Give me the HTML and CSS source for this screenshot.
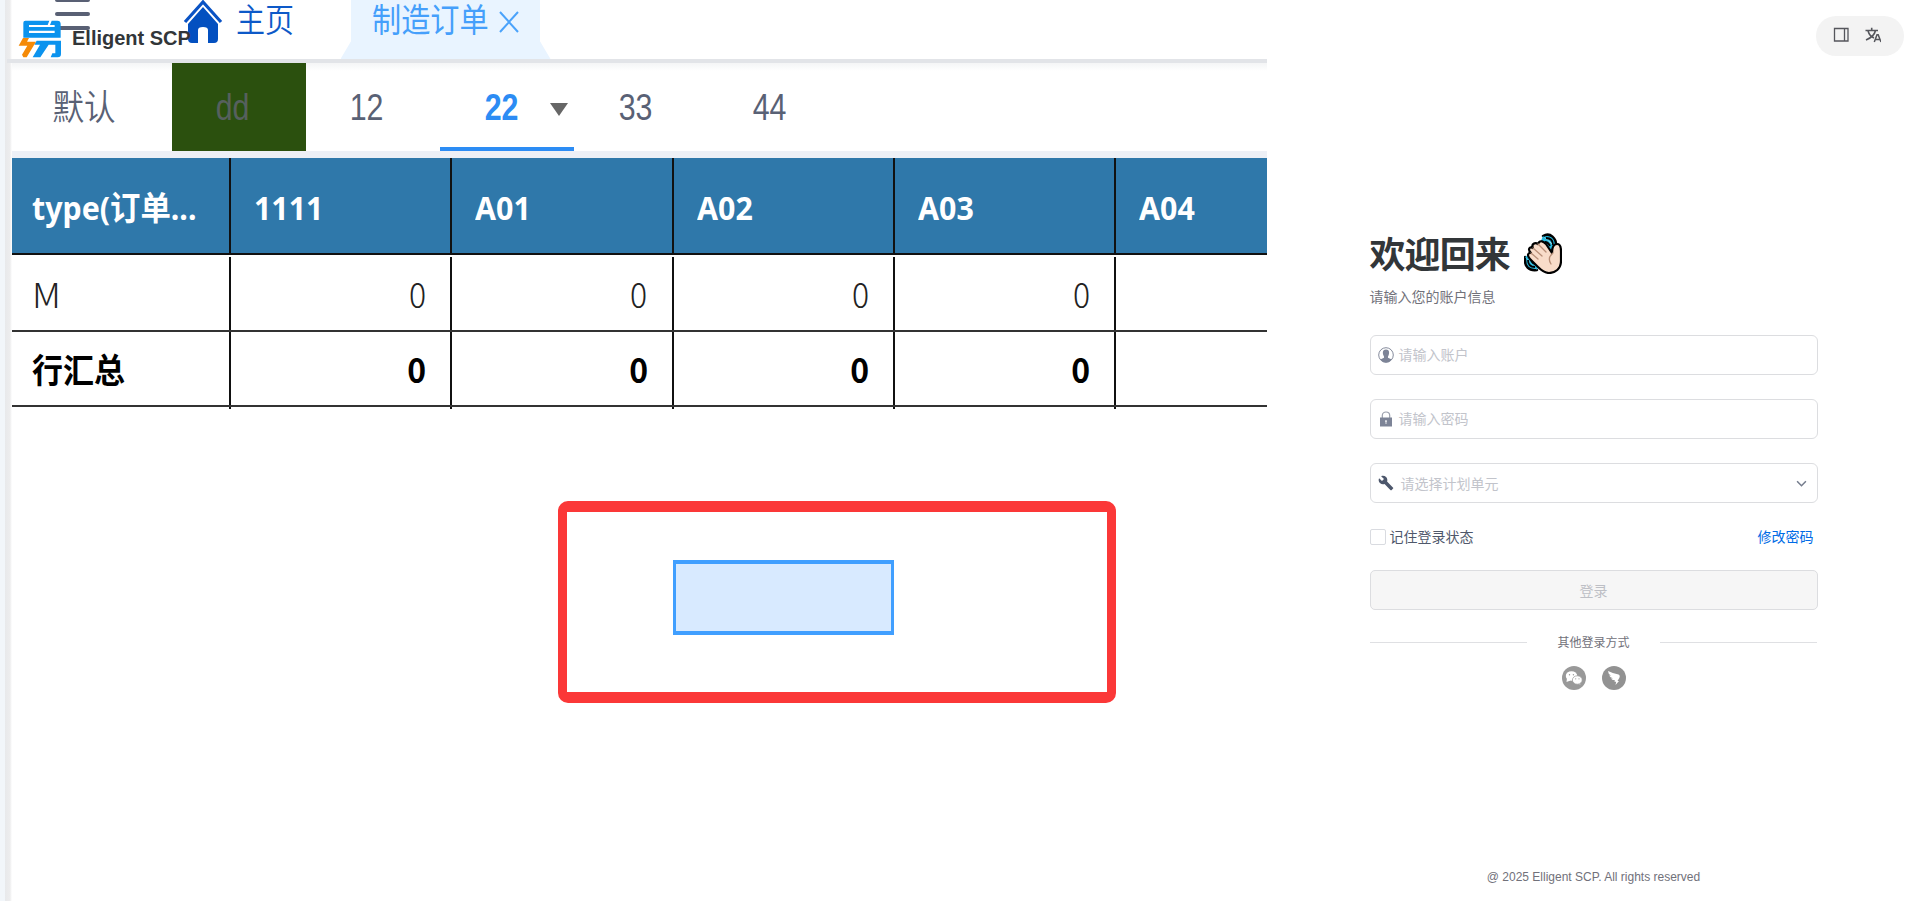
FILE: index.html
```html
<!DOCTYPE html>
<html lang="zh-CN">
<head>
<meta charset="utf-8">
<title>Elligent SCP</title>
<link rel="stylesheet" href="styles.css">
</head>
<body>
<main class="page">
  <section class="preview">
    <div class="brand">
      <svg class="brand-logo" viewBox="52 60 132 114">
        <path fill="#0b93ee" fill-rule="evenodd" d="M74 62H146L141 75H85V81H162V92H85V99H162V75H148L153 62H170Q180 62 180 72V113H68V68Q68 62 74 62Z"/>
        <path fill="#0b93ee" d="M108 122H181V162Q181 172 171 172H150L155 160H164V134H144L119 172H96L118 134H101Z"/>
        <path fill="#f58a07" d="M67 114H85L79 125H106L78 172H68L64 164L80 137H54Z"/>
      </svg>
      <span>Elligent SCP</span>
    </div>
    <header class="shot-bar">
      <div class="burger"><i></i><i></i><i></i></div>
      <svg class="home" viewBox="0 0 40 46"><path d="M2 23 20 3 38 23" fill="none" stroke="#0a53c4" stroke-width="3.2"/><path d="M20 8 35 25V40Q35 44 31 44H25V31Q25 28 20 28T15 31V44H9Q5 44 5 40V25Z" fill="#0350c0"/></svg>
      <span class="home-label"><b class="sq">主页</b></span>
      <div class="open-tab"><b class="sq">制造订单</b>
        <svg class="close" viewBox="0 0 20 22"><path d="M1 1 19 21M19 1 1 21" stroke="#4ba3fb" stroke-width="2"/></svg>
      </div>
    </header>
    <nav class="views">
      <div class="view first"><b class="sq">默认</b></div>
      <div class="view green"><b class="sq num">dd</b></div>
      <div class="view"><b class="sq num">12</b></div>
      <div class="view active"><b class="sq num">22</b><i class="caret"></i></div>
      <div class="view"><b class="sq num">33</b></div>
      <div class="view"><b class="sq num">44</b></div>
    </nav>
    <div class="grid head">
      <div><b class="sq">type(订单...</b></div><div><b class="sq">1111</b></div><div><b class="sq">A01</b></div><div><b class="sq">A02</b></div><div><b class="sq">A03</b></div><div><b class="sq">A04</b></div>
    </div>
    <div class="grid row">
      <div><b class="sq wide">M</b></div><div><b class="sq">0</b></div><div><b class="sq">0</b></div><div><b class="sq">0</b></div><div><b class="sq">0</b></div><div></div>
    </div>
    <div class="grid row total">
      <div><b class="sq">行汇总</b></div><div><b class="sq">0</b></div><div><b class="sq">0</b></div><div><b class="sq">0</b></div><div><b class="sq">0</b></div><div></div>
    </div>
    <div class="grid stub"><div></div><div></div><div></div><div></div><div></div><div></div></div>
    <div class="callout"><div class="cell"></div></div>
  </section>

  <section class="login">
    <div class="tools">
      <svg viewBox="0 0 16 16"><path d="M1.5 1.5H15V14H1.5ZM11.5 1.5V14" fill="none" stroke="#55565c" stroke-width="1.3"/></svg>
      <svg viewBox="0 0 16 16"><path d="M.5 3.500H13M6.700 .8V3.500M10.500 3.500C9.500 8 6 11 1 13M3 3.800C4 7.500 6.500 10 9 11" fill="none" stroke="#55565c" stroke-width="1.600"/><path d="M9.300 15 12 7.800H13.200L16 15M10.300 12.600H15" fill="none" stroke="#55565c" stroke-width="1.500"/></svg>
    </div>
    <form class="form">
      <h1 class="title"><span>欢迎回来</span>
        <svg class="wave" viewBox="0 0 38 41">
          <path d="M19 3C26-1 33 5 32 14M1 24C0 34 5 38 13 37" fill="#23b5da" stroke="#000" stroke-width="2.5" stroke-linecap="round"/>
          <path d="M19 3 32 15 27 20 16 10ZM1 24 13 37 15 31 4 22Z" fill="#25b7dc"/>
          <path d="M22 5C27 5 29 8 29 12M21 9C24 9 25 11 26 13M4 27C4 32 7 34 11 34M7 27C8 30 9 31 12 31" fill="none" stroke="#000" stroke-width="1.8"/>
          <path d="M28 20C28 15 29 11 33 11C36 11 37 14 37 18V28C37 36 31 40 25 40C20 40 17 37 14 34L6 26C2 22 5 19 7 20C3 16 6 13 9 15C7 11 11 9 14 11C16 6 20 9 22 11Z" fill="#f8dcc9" stroke="#000" stroke-width="2.2" stroke-linejoin="round"/>
          <path d="m7 20 7 6M9 15l9 8M14 11l8 8M29 20C24 24 25 28 27 31" fill="none" stroke="#b88f78" stroke-width="1.3" stroke-linecap="round"/>
        </svg>
      </h1>
      <p class="subtitle">请输入您的账户信息</p>
      <div class="field">
        <svg viewBox="0 0 16 16"><circle cx="8" cy="8" r="7.3" fill="none" stroke="#858b9c"/><path d="M8 2.4C11.5 2.4 11.6 6 10.5 8.4L10 9.4V10.8L13.7 12.4Q11.5 15.4 8 15.4T2.3 12.4L6 10.8V9.4L5.5 8.4C4.4 6 4.5 2.4 8 2.4Z" fill="#7d8497"/></svg>
        <span>请输入账户</span>
      </div>
      <div class="field">
        <svg viewBox="0 0 16 16"><path d="M4.3 7V4.5C4.3-.2 11.7-.2 11.7 4.5V7" fill="none" stroke="#9ba0ad" stroke-width="1.2"/><path d="M2 6.500H14V15.500H2Z" fill="#7d8497"/><path d="M8 9a1.200 1.200 0 0 1 .5 2.200V13h-1v-1.800A1.200 1.200 0 0 1 8 9Z" fill="#dfe1e6"/></svg>
        <span>请输入密码</span>
      </div>
      <div class="field select">
        <svg viewBox="0 0 24 24"><path fill="#4d576c" d="m22.7 19-9.100-9.100c.9-2.300.4-5-1.500-6.900-2-2-5-2.400-7.400-1.300L9 6 6 9 1.600 4.700C.4 7.100.9 10.100 2.900 12.100c1.900 1.900 4.600 2.400 6.900 1.500l9.100 9.100c.4.4 1 .4 1.400 0l2.300-2.300c.5-.4.5-1.100.1-1.400z"/></svg>
        <span>请选择计划单元</span>
        <svg class="chev" viewBox="0 0 10 10"><path d="m1 3 4 4 4-4" fill="none" stroke="#747c8d" stroke-width="1.400"/></svg>
      </div>
      <div class="options"><i class="check"></i><span>记住登录状态</span><a class="link">修改密码</a></div>
      <div class="submit">登录</div>
      <div class="divider"><i></i><span>其他登录方式</span><i></i></div>
      <div class="social">
        <svg viewBox="0 0 24 24"><circle cx="12" cy="12" r="12" fill="#999"/><ellipse cx="9.500" cy="10" rx="5.700" ry="4.800" fill="#fff"/><path d="m5 12-.5 4 4-1.500ZM17 16l1.500 2.600-4-1Z" fill="#fff"/><ellipse cx="15.300" cy="14" rx="4.900" ry="4.200" fill="#fff" stroke="#999" stroke-width=".7"/><g fill="#999"><circle cx="7.500" cy="8.800" r=".7"/><circle cx="11.400" cy="8.800" r=".7"/><circle cx="13.700" cy="12.800" r=".6"/><circle cx="17" cy="12.800" r=".6"/></g></svg>
        <svg viewBox="0 0 24 24"><circle cx="12" cy="12" r="12" fill="#929292"/><path d="M6 5Q11 7.500 16.500 8.500 18.500 9.500 17.300 12L15.500 15H17L13.500 19 14.200 15.800H12.500L13 14.300Q10 14.500 9 12.500L11 12.300Q8 11.500 7.200 9.500L9 9.600Q6 8 6 5Z" fill="#fff"/></svg>
      </div>
    </form>
    <footer class="copy">@ 2025 Elligent SCP. All rights reserved</footer>
  </section>
</main>
</body>
</html>
```

FILE: styles.css
```css
* { box-sizing: border-box; }
body { margin: 0; background: #fff; font-family: "Liberation Sans", "Noto Sans CJK SC", sans-serif; color: #4f586b; overflow: hidden; }
.page { display: flex; width: 1920px; height: 901px; }

.preview { position: relative; width: 1267px; height: 901px; overflow: hidden; padding-left: 11.500px; background: linear-gradient(90deg, #f2f6fa 5px, #e8e9eb 5px, #ededee 10px, #fff 12px) no-repeat; }
.brand { position: absolute; z-index: 2; left: 18px; top: 20px; display: flex; align-items: center; gap: 10px; height: 38px; font-size: 20px; font-weight: 700; color: #323639; white-space: nowrap; }
.brand span { margin-top: -2px; }
.brand-logo { width: 44px; height: 38px; }
.sq { display: inline-block; font-weight: inherit; transform: scaleX(.86); transform-origin: left center; white-space: nowrap; }

.shot-bar { display: flex; height: 63px; margin-left: -5px; padding-left: 48px; border-bottom: 4px solid #e2e4e8; }
.burger { width: 35px; display: flex; flex-direction: column; gap: 10px; margin-top: -2px; }
.burger i { height: 4px; border-radius: 2px; background: #596074; }
.home { width: 40px; height: 46px; margin: -1px 0 0 93px; flex: none; }
.home-label { width: 118px; padding-left: 13px; font: 350 33px/36px "Noto Sans CJK SC", sans-serif; color: #0d59c8; }
.home-label .sq { transform: scaleX(.88); }
.open-tab { width: 210px; height: 59px; display: flex; padding-left: 31px; background: #e9f4ff; clip-path: polygon(5% 0, 95% 0, 95% 70%, 100% 100%, 0 100%, 5% 70%); font: 33.500px/36px "Noto Sans CJK SC", sans-serif; color: #459ffb; }
.open-tab .sq { width: 127px; transform: scaleX(.87); }
.close { width: 20px; height: 22px; margin-top: 11px; flex: none; }

.views { display: flex; height: 88px; background: linear-gradient(#f4f5f6, #fff 8px); font-size: 35px; color: #596175; }
.view { width: 134.300px; height: 88px; display: flex; align-items: center; justify-content: center; padding-right: 12px; position: relative; flex: none; }
.view .sq { transform-origin: center; }
.view .num { font-size: 37px; transform: translateY(1px) scaleX(.82); }
.view.first { width: 160px; padding: 0 14px 6px 0; font-family: "Noto Sans CJK SC", sans-serif; font-weight: 350; }
.view.first .sq { transform: scaleX(.9); }
.view.green { background: #2b500e; color: #56605e; }
.view.active { border-bottom: 4px solid #2c8cf4; color: #2c8cf4; font-weight: 700; padding-top: 4px; }
.caret { position: absolute; right: 6px; top: 40px; border: 9.500px solid transparent; border-top: 13px solid #666; border-bottom: 0; }

.grid { display: grid; grid-template-columns: 219.500px repeat(4, 221.300px) 151px; font-family: "Noto Sans", "Noto Sans CJK SC", sans-serif; }
.grid > div { border-right: 2px solid #111; display: flex; align-items: center; overflow: hidden; }
.grid > div:last-child { border-right: 0; }
.head { height: 104px; border-top: 7px solid #edf0f6; border-bottom: 2px solid #111; background: #2f78aa; color: #fff; font-size: 33px; font-weight: 700; }
.head > div { padding: 4px 0 0 23px; }
.head > div:first-child { padding: 0 0 0 20px; }
.head .sq { transform: scaleX(.92); }
.head > div:first-child .sq { width: 190px; }
.row { height: 77px; border-bottom: 2px solid #333; padding-top: 2px; font-size: 34px; font-weight: 300; font-family: "Noto Sans CJK SC", sans-serif; color: #222; }
.row > div { justify-content: flex-end; padding-right: 24px; }
.row > div:first-child { justify-content: flex-start; padding-left: 20px; }
.row .sq { transform: scaleX(.94); transform-origin: right center; }
.row > div:first-child .sq { transform: scaleX(.91); transform-origin: left center; }
.row > div:first-child .wide { transform: scaleX(1.08); }
.total { height: 75px; padding-top: 0; font-weight: 700; color: #000; }
.stub { height: 2px; }
.callout { width: 558px; height: 202px; margin: 92px 0 0 546.500px; padding: 48px 0 0 106px; border: solid #fb3838; border-width: 11px 9px; border-radius: 10px; }
.cell { width: 221px; height: 75px; background: #d8eaff; border: 4px solid #409fff; border-width: 4px 3px; }

.login { position: relative; width: 653px; display: flex; flex-direction: column; align-items: center; }
.tools { display: flex; align-items: center; align-self: flex-end; width: 88px; height: 40px; margin: 16px 16px 0 0; padding: 0 0 3px 17px; gap: 16px; border-radius: 20px; background: #f3f3f3; }
.tools svg { width: 16px; height: 16px; }
.form { width: 448px; margin-top: 174px; font-size: 14px; font-family: "Noto Sans CJK SC", sans-serif; }
.title { display: flex; height: 46px; align-items: center; gap: 14px; margin: 0; font-size: 36px; letter-spacing: -.9px; color: #323639; }
.title span { margin-top: -2px; }
.wave { width: 38px; height: 41px; }
.subtitle { margin: 9px 0 28px; line-height: 22px; color: #71717a; }
.field { height: 40px; display: flex; align-items: center; gap: 5px; margin-bottom: 24px; padding-left: 7px; border: 1px solid #dcdde0; border-radius: 6px; color: #c2c4cb; }
.field > span, .options > span, .link, .divider span { padding-bottom: 2px; }
.field > svg { width: 16px; height: 16px; flex: none; }
.select { gap: 7px; padding-right: 10px; margin-bottom: 23px; }
.select > span { padding-bottom: 0; }
.field > .chev { width: 11px; height: 11px; margin-left: auto; }
.options { display: flex; align-items: center; height: 22px; }
.check { width: 16px; height: 16px; margin-right: 4px; border: 1px solid #d9dbe0; border-radius: 2px; }
.link { margin-left: auto; margin-right: 4px; color: #006be6; }
.submit { height: 40px; margin-top: 22px; border: 1px solid #dcdde0; border-radius: 5px; background: #f6f6f6; color: #bdbfc5; text-align: center; line-height: 38px; }
.divider { display: flex; align-items: center; justify-content: space-between; height: 20px; margin-top: 22px; font-size: 12px; color: #71717a; }
.divider i { width: 157px; height: 1px; background: #dfe0e3; }
.social { display: flex; justify-content: center; gap: 16px; margin-top: 14px; }
.social svg { width: 24px; height: 24px; }
.copy { margin-top: auto; height: 31px; font-size: 12px; line-height: 14px; color: #71717a; }
```
